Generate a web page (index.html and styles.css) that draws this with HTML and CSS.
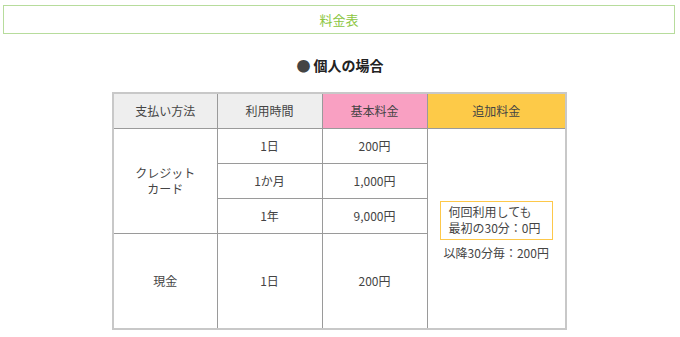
FILE: index.html
```html
<!DOCTYPE html>
<html lang="ja">
<head>
<meta charset="utf-8">
<link rel="stylesheet" href="styles.css">
</head>
<body>
<div class="title">料金表</div>
<h2 class="heading"><span class="dot">●</span> 個人の場合</h2>
<table class="price">
  <colgroup>
    <col class="c1"><col class="c2"><col class="c3"><col class="c4">
  </colgroup>
  <tr class="head">
    <th class="gray">支払い方法</th>
    <th class="gray">利用時間</th>
    <th class="pink">基本料金</th>
    <th class="yellow">追加料金</th>
  </tr>
  <tr class="row">
    <td rowspan="3">クレジット<br>カード</td>
    <td>1日</td>
    <td>200円</td>
    <td rowspan="4" class="extra">
      <div class="note">何回利用しても<br>最初の30分：0円</div>
      <div class="after">以降30分毎：200円</div>
    </td>
  </tr>
  <tr class="row"><td>1か月</td><td>1,000円</td></tr>
  <tr class="row"><td>1年</td><td>9,000円</td></tr>
  <tr class="cash"><td>現金</td><td>1日</td><td>200円</td></tr>
</table>
</body>
</html>
```
FILE: styles.css
```css
html, body {
  margin: 0;
  padding: 0;
  background: #fff;
  font-family: "Noto Sans CJK JP", "Noto Sans", sans-serif;
  color: #333;
}
.title {
  margin: 5px 5px 0 3px;
  height: 27px;
  border: 1px solid #b7dc9c;
  color: #8cc63f;
  font-size: 13px;
  display: flex;
  align-items: center;
  justify-content: center;
}
.heading {
  margin: 21px 0 0;
  text-align: center;
  font-size: 14px;
  font-weight: bold;
  line-height: 20px;
  color: #222;
}
.dot { color: #444; }
.price {
  margin: 17px 0 0 112px;
  width: 453px;
  border-collapse: collapse;
  border: 2px solid #c8c8c8;
  table-layout: fixed;
  font-size: 12px;
  color: #444;
}
.c1 { width: 104px; }
.c2 { width: 105px; }
.c3 { width: 105px; }
.c4 { width: 139px; }
.price th, .price td {
  border: 1px solid #9a9a9a;
  text-align: center;
  vertical-align: middle;
  padding: 0;
  font-weight: normal;
  line-height: 16px;
}
.head th { height: 34px; }
.gray { background: #eeeeee; }
.pink { background: #f9a0c2; }
.yellow { background: #fdca48; }
.row td { height: 34px; }
.cash td { height: 94px; }
.price .extra { padding: 0 12px; }
.note {
  border: 1px solid #fdc84a;
  text-align: left;
  padding: 2px 8px 3px;
  margin-top: 4px;
}
.after {
  margin-top: 5px;
}
```
